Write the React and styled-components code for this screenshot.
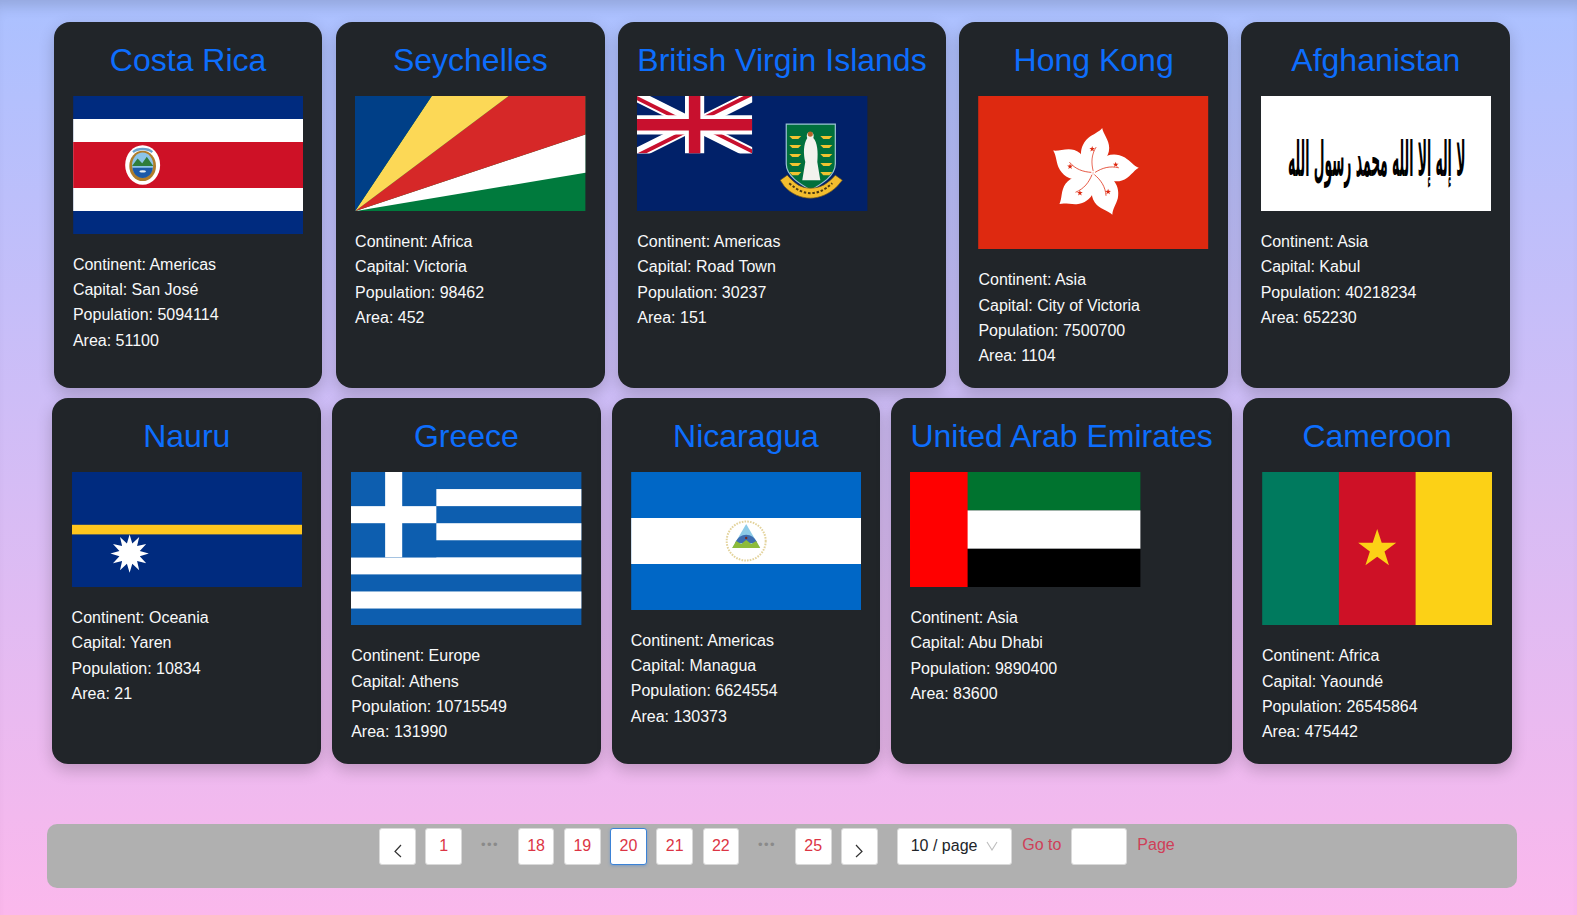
import React from 'react';
import styled, { createGlobalStyle } from 'styled-components';

const GlobalStyle = createGlobalStyle`
  * {
    box-sizing: border-box;
  }

  html,
  body {
    margin: 0;
    height: 100%;
    overflow: hidden;
    font-family: "Liberation Sans", Arial, sans-serif;
  }
`;

const Page = styled.div`
  height: 915px;
  padding: 22px 60px 0 47px;
  background: linear-gradient(180deg, #abc1ff 0%, #fbb8ec 100%);
  box-shadow: inset 0 14px 14px -8px rgba(0, 0, 0, 0.14);
`;

const CardGrid = styled.div`
  display: flex;
  flex-wrap: wrap;
  justify-content: space-around;
  row-gap: 10px;
`;

const Card = styled.article`
  padding: 19.2px;
  border-radius: 16px;
  background: #212529;
  box-shadow: 0 6px 16px rgba(0, 0, 0, 0.2);
`;

const Title = styled.h2`
  margin: 0 0 16px;
  font-size: 32px;
  font-weight: 400;
  line-height: 38.4px;
  text-align: center;
  white-space: nowrap;
  color: #0d6efd;
`;

const FlagImage = styled.svg`
  display: block;
  width: 230.4px;
  height: ${(p) => p.$height}px;
  margin-bottom: 18px;
`;

const Facts = styled.div`
  font-size: 16px;
  line-height: 25.4px;
  white-space: nowrap;
  color: #f8f9fa;
`;

const PagerBar = styled.nav`
  display: flex;
  justify-content: center;
  align-items: flex-start;
  height: 64px;
  margin-top: 60px;
  padding-top: 4px;
  border-radius: 10px;
  background: #b0b0b0;
`;

const PageList = styled.ul`
  display: flex;
  gap: 9.6px;
  margin: 0;
  padding: 0;
  list-style: none;
`;

const PageItem = styled.li`
  display: flex;
  justify-content: center;
  align-items: center;
  width: 36.6px;
  height: 36.6px;
  border: 1px solid ${(p) => (p.$active ? '#3b82d6' : '#d9d9d9')};
  border-radius: 3px;
  background: #fff;
  font-size: 16px;
  color: #dc3545;
  box-shadow: ${(p) => (p.$active ? '0 1px 3px rgba(59, 130, 214, 0.45)' : 'none')};
`;

const Jump = styled.li`
  width: 36.6px;
  height: 36.6px;
  font-size: 13px;
  line-height: 33px;
  letter-spacing: 1.4px;
  text-align: center;
  color: #8a8a8a;
`;

const Chevron = styled.svg`
  width: 10px;
  height: 14px;
  margin-top: 9px;
  fill: none;
  stroke: #333;
  stroke-width: 1.2;
`;

const SizeSelect = styled.div`
  display: flex;
  justify-content: space-between;
  align-items: center;
  width: 115.5px;
  height: 36.6px;
  margin-left: 19px;
  padding: 0 13px;
  border: 1px solid #d9d9d9;
  border-radius: 3px;
  background: #fff;
  font-size: 16px;
  color: #212529;
`;

const SelectArrow = styled.svg`
  width: 12px;
  height: 10px;
  fill: none;
  stroke: #bdbdbd;
  stroke-width: 1.1;
`;

const JumpLabel = styled.span`
  margin: 0 10px;
  font-size: 16px;
  line-height: 34px;
  color: #cf3f58;
`;

const JumpInput = styled.input`
  width: 56px;
  height: 36.6px;
  padding: 0;
  border: 1px solid #d9d9d9;
  border-radius: 3px;
  background: #fff;
`;

const starPoints = (cx, cy, outer, inner, n) => {
  const points = [];
  for (let i = 0; i < n * 2; i++) {
    const radius = i % 2 === 0 ? outer : inner;
    const angle = (Math.PI * i) / n - Math.PI / 2;
    points.push(`${(cx + radius * Math.cos(angle)).toFixed(2)},${(cy + radius * Math.sin(angle)).toFixed(2)}`);
  }
  return points.join(' ');
};

function CostaRica() {
  return (
    <FlagImage $height={138} viewBox="0 0 500 300">
      <rect width="500" height="300" fill="#002b7f" />
      <rect y="50" width="500" height="200" fill="#fff" />
      <rect y="100" width="500" height="100" fill="#ce1126" />
      <ellipse cx="151" cy="150" rx="38" ry="43" fill="#fff" />
      <ellipse cx="151" cy="152" rx="29" ry="33" fill="#b07d2a" />
      <ellipse cx="151" cy="150" rx="23" ry="27" fill="#8cc4e8" />
      <path d="M128 152 L140 136 L150 146 L160 132 L174 152 Z" fill="#2f7d3b" />
      <path d="M129 156 H173 C172 170 162 178 151 178 C140 178 130 170 129 156 Z" fill="#1d5aa8" />
      <ellipse cx="151" cy="164" rx="7" ry="2.5" fill="#e8f0f4" />
      <path d="M130 122 C140 113 162 113 172 122" fill="none" stroke="#6aa2cc" strokeWidth="5" />
    </FlagImage>
  );
}

function Seychelles() {
  return (
    <FlagImage $height={115.2} viewBox="0 0 600 300">
      <rect width="600" height="300" fill="#007a3d" />
      <polygon points="0,300 600,100 600,200" fill="#fff" />
      <polygon points="0,300 400,0 600,0 600,100" fill="#d62828" />
      <polygon points="0,300 200,0 400,0" fill="#fcd856" />
      <polygon points="0,300 0,0 200,0" fill="#003f87" />
    </FlagImage>
  );
}

function VirginIslands() {
  return (
    <FlagImage $height={115.2} viewBox="0 0 230 115">
      <rect width="230" height="115" fill="#012169" />
      <svg width="115" height="57.5" viewBox="0 0 60 30">
        <clipPath id="jack-clip">
          <path d="M30,15 h30 v15 z v15 h-30 z h-30 v-15 z v-15 h30 z" />
        </clipPath>
        <path d="M0,0 L60,30 M60,0 L0,30" stroke="#fff" strokeWidth="6" />
        <path d="M0,0 L60,30 M60,0 L0,30" clipPath="url(#jack-clip)" stroke="#c8102e" strokeWidth="4" />
        <path d="M30,0 v30 M0,15 h60" stroke="#fff" strokeWidth="10" />
        <path d="M30,0 v30 M0,15 h60" stroke="#c8102e" strokeWidth="6" />
      </svg>
      <path d="M149 28 H198 V68 C198 80 184 88 173.5 94 C163 88 149 80 149 68 Z" fill="#00703c" stroke="#9cc3d5" strokeWidth="1.2" />
      <path d="M173 36 C176 36 177 39 176 42 C180 46 181 56 180 66 L183 84 H165 L168 66 C166 58 166 48 170 42 C169 39 170 36 173 36 Z" fill="#f2f2ee" />
      <circle cx="173" cy="38" r="2.6" fill="#b5652a" />
      {[40, 49, 58, 67, 76].map((y) => (
        <path key={`l${y}`} d={`M152 ${y} H164 L161 ${y + 3} H155 Z`} fill="#f0c330" />
      ))}
      {[40, 49, 58, 67, 76].map((y) => (
        <path key={`r${y}`} d={`M183 ${y} H195 L192 ${y + 3} H186 Z`} fill="#f0c330" />
      ))}
      <path d="M143 84 L150 79 C158 88 164 92 173 92 C183 92 190 88 198 79 L205 84 L200 90 C192 98 182 102 173 102 C164 102 154 98 147 90 Z" fill="#f3bd2e" stroke="#6b5520" strokeWidth="0.7" />
      <path d="M152 87 C160 94 166 97 173 97 C181 97 187 94 195 87" fill="none" stroke="#4a3a12" strokeWidth="2" strokeDasharray="2.5 1.8" />
    </FlagImage>
  );
}

function HongKong() {
  return (
    <FlagImage $height={153.6} viewBox="0 0 230 153.6">
      <rect width="230" height="153.6" fill="#de2910" />
      <g transform="translate(115 77)">
        {[0, 72, 144, 216, 288].map((angle) => (
          <g key={angle} transform={`rotate(${angle})`}>
            <path d="M0 0 C-13 -8 -17 -24 -5 -35 C0 -39 6 -41 9 -45 C10 -39 16 -33 16 -25 C16 -15 8 -11 4 -7 C2 -4 1 -2 0 0 Z" fill="#fff" />
            <path d="M0 -2 C-2 -10 -2 -18 3 -26" fill="none" stroke="#de2910" strokeWidth="0.7" />
            <polygon points={starPoints(-1, -24, 3, 1.2, 5)} fill="#de2910" />
          </g>
        ))}
      </g>
    </FlagImage>
  );
}

function Afghanistan() {
  return (
    <FlagImage $height={115.2} viewBox="0 0 230 115">
      <rect width="230" height="115" fill="#fff" />
      <text
        transform="translate(204 80) scale(1 2.4)"
        direction="rtl"
        fontFamily="'DejaVu Sans', sans-serif"
        fontWeight="700"
        fontSize="20"
        textLength="177"
        lengthAdjust="spacingAndGlyphs"
      >
        لا إله إلا الله محمد رسول الله
      </text>
    </FlagImage>
  );
}

function Nauru() {
  return (
    <FlagImage $height={115.2} viewBox="0 0 24 12">
      <rect width="24" height="12" fill="#002b7f" />
      <rect y="5.5" width="24" height="1" fill="#ffc61e" />
      <polygon points={starPoints(6, 8.5, 2, 1.1, 12)} fill="#fff" />
    </FlagImage>
  );
}

function Greece() {
  return (
    <FlagImage $height={153.6} viewBox="0 0 27 18">
      <rect width="27" height="18" fill="#0d5eaf" />
      {[2, 6, 10, 14].map((y) => (
        <rect key={y} x="0" y={y} width="27" height="2" fill="#fff" />
      ))}
      <rect width="10" height="10" fill="#0d5eaf" />
      <rect x="4" width="2" height="10" fill="#fff" />
      <rect y="4" width="10" height="2" fill="#fff" />
    </FlagImage>
  );
}

function Nicaragua() {
  return (
    <FlagImage $height={138} viewBox="0 0 230 138">
      <rect width="230" height="138" fill="#0067c6" />
      <rect y="46" width="230" height="46" fill="#fff" />
      <circle cx="115" cy="69" r="19.5" fill="none" stroke="#e3d39c" strokeWidth="2" strokeDasharray="1.6 1.2" />
      <polygon points="115,52 129,76 101,76" fill="#8ccbe8" />
      <path d="M104 71 C108 60 122 60 126 71 Z" fill="#3d6db0" />
      <path d="M101 76 L105 69 L110 72 L115 68 L120 72 L125 69 L129 76 Z" fill="#8dbb3a" />
      <circle cx="115" cy="66" r="1.2" fill="#7a2a20" />
    </FlagImage>
  );
}

function Emirates() {
  return (
    <FlagImage $height={115.2} viewBox="0 0 12 6">
      <rect width="12" height="2" fill="#00732f" />
      <rect y="2" width="12" height="2" fill="#fff" />
      <rect y="4" width="12" height="2" fill="#000" />
      <rect width="3" height="6" fill="#f00" />
    </FlagImage>
  );
}

function Cameroon() {
  return (
    <FlagImage $height={153.6} viewBox="0 0 230 153.6">
      <rect width="77" height="153.6" fill="#007a5e" />
      <rect x="76.7" width="77" height="153.6" fill="#ce1126" />
      <rect x="153.4" width="77" height="153.6" fill="#fcd116" />
      <polygon points={starPoints(115, 77, 20, 7.7, 5)} fill="#fcd116" />
    </FlagImage>
  );
}

const countries = [
  { name: 'Costa Rica', continent: 'Americas', capital: 'San José', population: 5094114, area: 51100, Flag: CostaRica },
  { name: 'Seychelles', continent: 'Africa', capital: 'Victoria', population: 98462, area: 452, Flag: Seychelles },
  { name: 'British Virgin Islands', continent: 'Americas', capital: 'Road Town', population: 30237, area: 151, Flag: VirginIslands },
  { name: 'Hong Kong', continent: 'Asia', capital: 'City of Victoria', population: 7500700, area: 1104, Flag: HongKong },
  { name: 'Afghanistan', continent: 'Asia', capital: 'Kabul', population: 40218234, area: 652230, Flag: Afghanistan },
  { name: 'Nauru', continent: 'Oceania', capital: 'Yaren', population: 10834, area: 21, Flag: Nauru },
  { name: 'Greece', continent: 'Europe', capital: 'Athens', population: 10715549, area: 131990, Flag: Greece },
  { name: 'Nicaragua', continent: 'Americas', capital: 'Managua', population: 6624554, area: 130373, Flag: Nicaragua },
  { name: 'United Arab Emirates', continent: 'Asia', capital: 'Abu Dhabi', population: 9890400, area: 83600, Flag: Emirates },
  { name: 'Cameroon', continent: 'Africa', capital: 'Yaoundé', population: 26545864, area: 475442, Flag: Cameroon }
];

const pages = [1, null, 18, 19, 20, 21, 22, null, 25];

function CountryCard({ country }) {
  const { Flag } = country;

  return (
    <Card>
      <Title>{country.name}</Title>
      <Flag />
      <Facts>
        <div>Continent: {country.continent}</div>
        <div>Capital: {country.capital}</div>
        <div>Population: {country.population}</div>
        <div>Area: {country.area}</div>
      </Facts>
    </Card>
  );
}

function Pager() {
  return (
    <PagerBar>
      <PageList>
        <PageItem>
          <Chevron viewBox="0 0 10 14"><path d="M8 1 L2 7.5 L8 13" /></Chevron>
        </PageItem>
        {pages.map((page, index) => (
          page === null
            ? <Jump key={`jump-${index}`}>•••</Jump>
            : <PageItem key={page} $active={page === 20}>{page}</PageItem>
        ))}
        <PageItem>
          <Chevron viewBox="0 0 10 14"><path d="M2 1 L8 7.5 L2 13" /></Chevron>
        </PageItem>
      </PageList>
      <SizeSelect>
        10 / page
        <SelectArrow viewBox="0 0 12 10"><path d="M1 1 L6 9 L11 1" /></SelectArrow>
      </SizeSelect>
      <JumpLabel>Go to</JumpLabel>
      <JumpInput type="text" aria-label="Go to page" />
      <JumpLabel>Page</JumpLabel>
    </PagerBar>
  );
}

export default function App() {
  return (
    <Page>
      <GlobalStyle />
      <CardGrid>
        {countries.map((country) => (
          <CountryCard key={country.name} country={country} />
        ))}
      </CardGrid>
      <Pager />
    </Page>
  );
}
